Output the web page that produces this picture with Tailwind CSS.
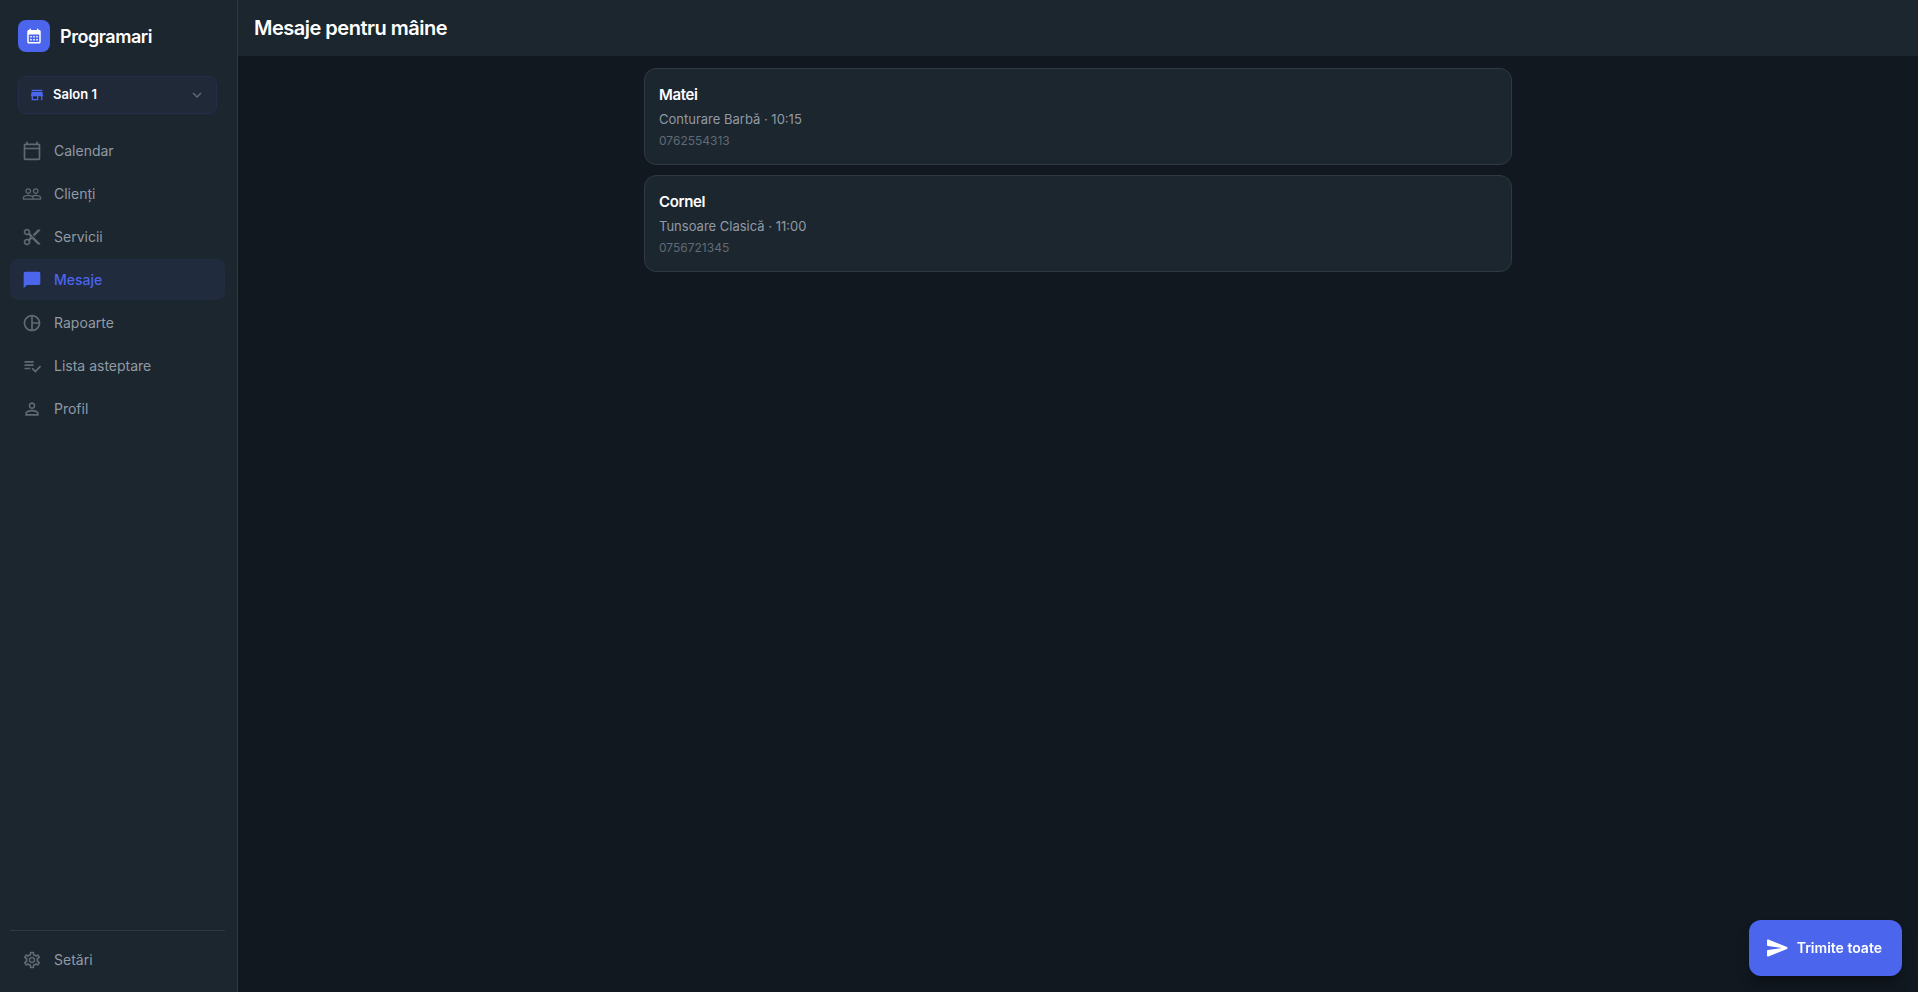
<!DOCTYPE html>
<html lang="ro">
<head>
    <meta charset="UTF-8">
    <meta name="viewport" content="width=device-width, initial-scale=1">
    <title>Programari - Mesaje</title>
    <script src="https://cdn.jsdelivr.net/npm/@tailwindcss/browser@4"></script>
</head>
<body class="flex min-h-screen bg-[#111820] font-['Inter','Roboto',sans-serif] text-white">
    <!-- Sidebar -->
    <aside class="flex w-[238px] shrink-0 flex-col border-r border-[#2e3944] bg-[#1c262f]">
        <div class="flex items-center gap-2.5 px-[18px] pt-5">
            <span class="flex size-8 items-center justify-center rounded-lg bg-[#4b65ec]">
                <svg class="size-[18px]" viewBox="0 0 24 24" fill="currentColor"><path fill-rule="evenodd" d="M19 4h-1V3c0-.55-.45-1-1-1s-1 .45-1 1v1H8V3c0-.55-.45-1-1-1s-1 .45-1 1v1H5c-1.110 0-2 .9-2 2v14c0 1.100.89 2 2 2h14c1.100 0 2-.9 2-2V6c0-1.100-.9-2-2-2zm0 16H5V10h14v10zM7 12h2v2H7zm4 0h2v2h-2zm4 0h2v2h-2zM7 16h2v2H7zm4 0h2v2h-2zm4 0h2v2h-2z"/></svg>
            </span>
            <span class="pt-0.5 text-lg leading-6 font-semibold tracking-tight">Programari</span>
        </div>

        <div class="pt-6 pr-5 pl-[18px]">
            <button type="button" class="flex h-[38px] w-full items-center gap-2 rounded-lg border border-[#222f4c] bg-[#1f2938] px-2.5 text-left">
                <svg class="size-4 text-[#4b65ec]" viewBox="0 0 24 24" fill="currentColor"><path d="M20 4H4v2h16V4zm1 10v-2l-1-5H4l-1 5v2h1v6h10v-6h4v6h2v-6h1zm-9 4H6v-4h6v4z"/></svg>
                <span class="flex-1 text-[13px] font-semibold">Salon 1</span>
                <svg class="size-[18px] text-[#606a74]" viewBox="0 0 24 24" fill="currentColor"><path d="M7.410 8.590 12 13.170l4.590-4.580L18 10l-6 6-6-6z"/></svg>
            </button>
        </div>

        <nav class="flex flex-1 flex-col gap-0.5 pt-4 pr-3 pl-2.5 text-sm text-[#919aa4]">
            <a href="#" class="flex h-[41px] items-center gap-3 rounded-lg px-3">
                <svg class="size-5 text-[#606a74]" viewBox="0 0 24 24" fill="currentColor"><path d="M20 3h-1V1h-2v2H7V1H5v2H4c-1.100 0-2 .9-2 2v16c0 1.100.9 2 2 2h16c1.100 0 2-.9 2-2V5c0-1.100-.9-2-2-2zm0 18H4V10h16v11zm0-13H4V5h16v3z"/></svg>
                Calendar
            </a>
            <a href="#" class="flex h-[41px] items-center gap-3 rounded-lg px-3">
                <svg class="size-5 text-[#606a74]" viewBox="0 0 24 24" fill="currentColor"><path d="M16.500 13c-1.200 0-3.070.34-4.500 1-1.430-.67-3.300-1-4.500-1C5.330 13 1 14.080 1 16.250V19h22v-2.750c0-2.170-4.330-3.250-6.500-3.250zm-4 4.500h-10v-1.250c0-.54 2.560-1.750 5-1.750s5 1.210 5 1.750v1.250zm9 0H14v-1.250c0-.46-.2-.86-.52-1.220.88-.3 1.960-.53 3.020-.53 2.440 0 5 1.210 5 1.750v1.250zM7.500 12c1.930 0 3.500-1.570 3.500-3.500S9.430 5 7.500 5 4 6.570 4 8.500 5.570 12 7.500 12zm0-5.500c1.100 0 2 .9 2 2s-.9 2-2 2-2-.9-2-2 .9-2 2-2zm9 5.500c1.930 0 3.500-1.570 3.500-3.500S18.430 5 16.500 5 13 6.570 13 8.500s1.570 3.500 3.500 3.500zm0-5.500c1.100 0 2 .9 2 2s-.9 2-2 2-2-.9-2-2 .9-2 2-2z"/></svg>
                Clienți
            </a>
            <a href="#" class="flex h-[41px] items-center gap-3 rounded-lg px-3">
                <svg class="size-5 text-[#606a74]" viewBox="0 0 24 24" fill="currentColor"><path d="M9.640 7.640c.23-.5.36-1.050.36-1.640 0-2.210-1.790-4-4-4S2 3.790 2 6s1.790 4 4 4c.59 0 1.140-.13 1.640-.36L10 12l-2.360 2.360C7.140 14.130 6.590 14 6 14c-2.210 0-4 1.790-4 4s1.790 4 4 4 4-1.790 4-4c0-.59-.13-1.140-.36-1.640L12 14l7 7h3v-1L9.640 7.640zM6 8c-1.100 0-2-.89-2-2s.9-2 2-2 2 .89 2 2-.9 2-2 2zm0 12c-1.100 0-2-.89-2-2s.9-2 2-2 2 .89 2 2-.9 2-2 2zm6-7.500c-.28 0-.5-.22-.5-.5s.22-.5.5-.5.5.22.5.5-.22.5-.5.5zM19 3l-6 6 2 2 7-7V3z"/></svg>
                Servicii
            </a>
            <a href="#" aria-current="page" class="flex h-[41px] items-center gap-3 rounded-lg bg-[#202b3d] px-3 font-medium text-[#4b65ec]">
                <svg class="size-5" viewBox="0 0 24 24" fill="currentColor"><path d="M20 2H4c-1.100 0-1.990.9-1.990 2L2 22l4-4h14c1.100 0 2-.9 2-2V4c0-1.100-.9-2-2-2z"/></svg>
                Mesaje
            </a>
            <a href="#" class="flex h-[41px] items-center gap-3 rounded-lg px-3">
                <svg class="size-5 text-[#606a74]" viewBox="0 0 24 24" fill="currentColor"><path d="M12 2C6.480 2 2 6.480 2 12s4.480 10 10 10 10-4.480 10-10S17.520 2 12 2zm1 2.070c3.610.45 6.480 3.330 6.930 6.930H13V4.070zM4 12c0-4.060 3.070-7.440 7-7.930v15.870c-3.930-.5-7-3.880-7-7.940zm9 7.930V13h6.930c-.45 3.610-3.320 6.480-6.930 6.930z"/></svg>
                Rapoarte
            </a>
            <a href="#" class="flex h-[41px] items-center gap-3 rounded-lg px-3">
                <svg class="size-5 text-[#606a74]" viewBox="0 0 24 24" fill="currentColor"><path d="M14 10H3v2h11v-2zm0-4H3v2h11V6zM3 16h7v-2H3v2zm18.500-4.500L23 13l-6.990 7-4.510-4.500L13 14l3.010 3 5.490-5.500z"/></svg>
                Lista asteptare
            </a>
            <a href="#" class="flex h-[41px] items-center gap-3 rounded-lg px-3">
                <svg class="size-5 text-[#606a74]" viewBox="0 0 24 24" fill="currentColor"><path d="M12 5.900c1.160 0 2.100.94 2.100 2.100s-.94 2.100-2.100 2.100S9.900 9.160 9.900 8s.94-2.100 2.100-2.100m0 9c2.970 0 6.100 1.460 6.100 2.100v1.100H5.900V17c0-.64 3.130-2.100 6.100-2.100M12 4C9.790 4 8 5.790 8 8s1.790 4 4 4 4-1.790 4-4-1.790-4-4-4zm0 9c-2.670 0-8 1.340-8 4v3h16v-3c0-2.660-5.330-4-8-4z"/></svg>
                Profil
            </a>
        </nav>

        <div class="pr-3 pb-3 pl-2.5 text-sm text-[#919aa4]">
            <div class="border-t border-[#2e3944] pt-2">
                <a href="#" class="flex h-[41px] items-center gap-3 rounded-lg px-3">
                    <svg class="size-5 text-[#606a74]" viewBox="0 0 24 24" fill="currentColor"><path d="M19.430 12.980c.04-.32.07-.64.07-.98 0-.34-.03-.66-.07-.98l2.110-1.650c.19-.15.24-.42.12-.64l-2-3.460c-.09-.16-.26-.25-.44-.25-.06 0-.12.01-.17.03l-2.490 1c-.52-.4-1.080-.73-1.690-.98l-.38-2.650C14.460 2.180 14.250 2 14 2h-4c-.25 0-.46.18-.49.42l-.38 2.650c-.61.25-1.170.59-1.690.98l-2.490-1c-.06-.02-.12-.03-.18-.03-.17 0-.34.09-.43.25l-2 3.460c-.13.22-.07.49.12.64l2.110 1.650c-.04.32-.07.65-.07.98 0 .33.03.66.07.98l-2.110 1.650c-.19.15-.24.42-.12.64l2 3.460c.09.16.26.25.44.25.06 0 .12-.01.17-.03l2.490-1c.52.4 1.080.73 1.690.98l.38 2.650c.03.24.24.42.49.42h4c.25 0 .46-.18.49-.42l.38-2.650c.61-.25 1.170-.59 1.690-.98l2.490 1c.06.02.12.03.18.03.17 0 .34-.09.43-.25l2-3.460c.12-.22.07-.49-.12-.64l-2.110-1.650zm-1.980-1.710c.04.31.05.52.05.73 0 .21-.02.43-.05.73l-.14 1.130.89.7 1.080.84-.7 1.210-1.270-.51-1.040-.42-.9.68c-.43.32-.84.56-1.250.73l-1.060.43-.16 1.130-.2 1.350h-1.400l-.19-1.350-.16-1.130-1.060-.43c-.43-.18-.83-.41-1.230-.71l-.91-.7-1.060.43-1.270.51-.7-1.210 1.080-.84.89-.7-.14-1.130c-.03-.31-.05-.54-.05-.74s.02-.43.05-.73l.14-1.130-.89-.7-1.080-.84.7-1.210 1.270.51 1.040.42.9-.68c.43-.32.84-.56 1.250-.73l1.060-.43.16-1.130.2-1.350h1.390l.19 1.350.16 1.130 1.060.43c.43.18.83.41 1.230.71l.91.7 1.060-.43 1.270-.51.7 1.210-1.070.85-.89.7.14 1.130zM12 8c-2.210 0-4 1.790-4 4s1.790 4 4 4 4-1.790 4-4-1.790-4-4-4zm0 6c-1.100 0-2-.9-2-2s.9-2 2-2 2 .9 2 2-.9 2-2 2z"/></svg>
                    Setări
                </a>
            </div>
        </div>
    </aside>

    <!-- Content -->
    <div class="flex min-w-0 flex-1 flex-col">
        <header class="flex h-14 items-center bg-[#1c262f] px-4">
            <h1 class="text-xl font-semibold tracking-tight">Mesaje pentru mâine</h1>
        </header>

        <main class="mx-auto flex w-full max-w-[900px] flex-col gap-2.5 px-4 py-3">
            <article class="rounded-xl border border-[#2e3944] bg-[#1c262f] px-3.5 pt-4 pb-[13px]">
                <h2 class="text-[15px] leading-5 font-semibold tracking-tight">Matei</h2>
                <p class="mt-1 text-[13px] leading-5 text-[#919aa4]">Conturare Barbă · 10:15</p>
                <p class="mt-0.5 text-xs leading-5 text-[#606a74]">0762554313</p>
            </article>
            <article class="rounded-xl border border-[#2e3944] bg-[#1c262f] px-3.5 pt-4 pb-[13px]">
                <h2 class="text-[15px] leading-5 font-semibold tracking-tight">Cornel</h2>
                <p class="mt-1 text-[13px] leading-5 text-[#919aa4]">Tunsoare Clasică · 11:00</p>
                <p class="mt-0.5 text-xs leading-5 text-[#606a74]">0756721345</p>
            </article>
        </main>
    </div>

    <button type="button" class="fixed right-4 bottom-4 flex h-14 items-center gap-2 rounded-xl bg-[#4b65ec] pr-5 pl-4 text-sm font-semibold shadow-lg shadow-black/30">
        <svg class="size-6" viewBox="0 0 24 24" fill="currentColor"><path d="M3.400 20.400 22 12.900c.8-.4.8-1.400 0-1.800L3.400 3.600C2.700 3.300 2 3.800 2 4.500V9.100c0 .5.400.9.900 1L17 12 2.900 13.900c-.5.100-.9.500-.9 1v4.600c0 .7.700 1.200 1.400.9z"/></svg>
        Trimite toate
    </button>
</body>
</html>
